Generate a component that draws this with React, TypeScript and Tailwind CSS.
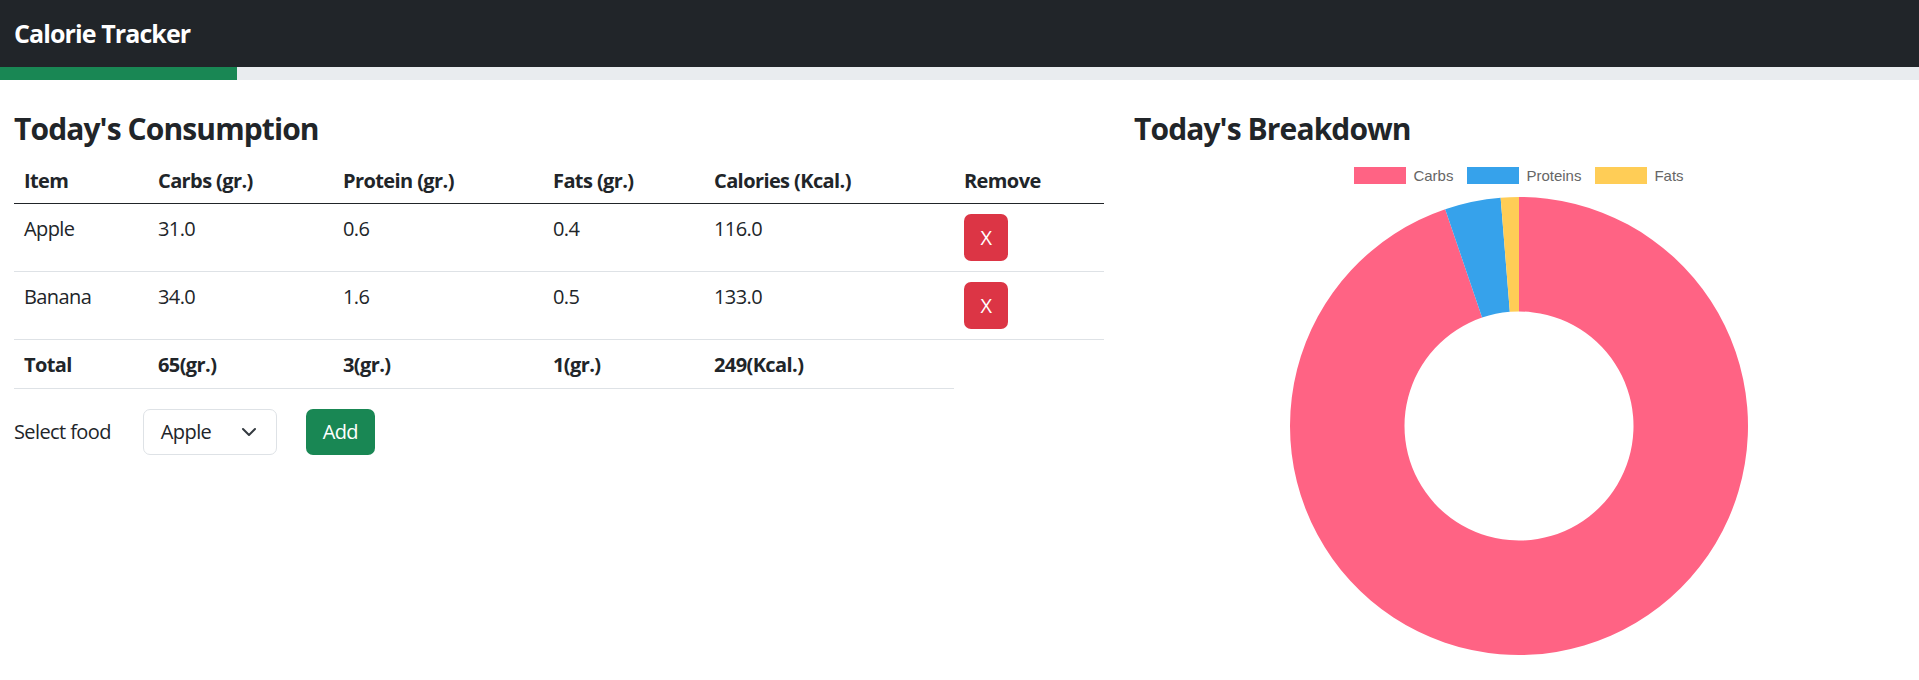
import React from "react";

type Slice = { label: string; color: string; from: number; to: number };

const slices: Slice[] = [
  { label: "Carbs", color: "#ff6384", from: 0, to: 341.2 },
  { label: "Proteins", color: "#36a2eb", from: 341.2, to: 355.4 },
  { label: "Fats", color: "#ffcd56", from: 355.4, to: 360 },
];

const rows = [
  { item: "Apple", carbs: "31.0", protein: "0.6", fats: "0.4", cal: "116.0" },
  { item: "Banana", carbs: "34.0", protein: "1.6", fats: "0.5", cal: "133.0" },
];

const pt = (deg: number, r: number, c: number) => {
  const a = (deg * Math.PI) / 180;
  return [c + r * Math.sin(a), c - r * Math.cos(a)];
};

const sector = (a0: number, a1: number, R: number, r: number, c: number) => {
  const [x1, y1] = pt(a0, R, c);
  const [x2, y2] = pt(a1, R, c);
  const [x3, y3] = pt(a1, r, c);
  const [x4, y4] = pt(a0, r, c);
  const large = a1 - a0 > 180 ? 1 : 0;
  return `M${x1} ${y1} A${R} ${R} 0 ${large} 1 ${x2} ${y2} L${x3} ${y3} A${r} ${r} 0 ${large} 0 ${x4} ${y4} Z`;
};

const Doughnut = () => (
  <svg width="460" height="460" viewBox="0 0 460 460">
    {slices.map((s) => (
      <path key={s.label} d={sector(s.from, s.to, 229, 114.5, 230)} fill={s.color} />
    ))}
  </svg>
);

const th = "text-left align-bottom px-[10px] pt-[13px] pb-[7px] leading-[30px] font-bold tracking-[-0.6px] border-b border-[#212529]";
const td = "text-left align-top px-[10px] py-[10px] leading-[30px] border-b border-[#dee2e6]";
const tdTotal = "text-left align-top px-[10px] pt-[10px] pb-[8px] leading-[30px] font-bold border-b border-[#dee2e6]";

const App = () => {
  return (
    <div className="min-h-screen bg-white text-[#212529] text-[20px] tracking-[-0.6px] font-['Open_Sans',sans-serif]">
      <nav className="h-[67px] bg-[#212529] flex items-center px-[14px]">
        <span className="text-white text-[25px] font-bold tracking-[-0.9px]">Calorie Tracker</span>
      </nav>
      <div className="h-[13px] bg-[#e9ecef]">
        <div className="h-full w-[237px] bg-[#198754]" />
      </div>

      <div className="flex">
        {/* left: consumption table */}
        <div className="w-[1119px] pl-[14px] pr-[15px]">
          <h3 className="mt-[31px] mb-[6px] text-[30px] leading-[36px] font-bold tracking-[-0.9px]">Today's Consumption</h3>
          <table className="w-full table-fixed border-collapse">
            <thead>
              <tr>
                <th className={`${th} w-[134px]`}>Item</th>
                <th className={`${th} w-[185px]`}>Carbs (gr.)</th>
                <th className={`${th} w-[210px]`}>Protein (gr.)</th>
                <th className={`${th} w-[161px]`}>Fats (gr.)</th>
                <th className={`${th} w-[250px]`}>Calories (Kcal.)</th>
                <th className={`${th} w-[150px]`}>Remove</th>
              </tr>
            </thead>
            <tbody>
              {rows.map((r) => (
                <tr key={r.item}>
                  <td className={td}>{r.item}</td>
                  <td className={td}>{r.carbs}</td>
                  <td className={td}>{r.protein}</td>
                  <td className={td}>{r.fats}</td>
                  <td className={td}>{r.cal}</td>
                  <td className={td}>
                    <button className="w-[44px] h-[47px] rounded-[7px] bg-[#dc3545] text-white text-[20px] flex items-center justify-center">
                      X
                    </button>
                  </td>
                </tr>
              ))}
              <tr>
                <td className={tdTotal}>Total</td>
                <td className={tdTotal}>65(gr.)</td>
                <td className={tdTotal}>3(gr.)</td>
                <td className={tdTotal}>1(gr.)</td>
                <td className={tdTotal}>249(Kcal.)</td>
              </tr>
            </tbody>
          </table>

          <div className="mt-[20px] flex items-center">
            <label className="leading-[30px]">Select food</label>
            <div className="ml-[32px] w-[134px] h-[46px] border border-[#dee2e6] rounded-[7px] flex items-center justify-between pl-[17px] pr-[19px]">
              <span>Apple</span>
              <svg width="16" height="12" viewBox="0 0 16 12">
                <path d="m2 3 6 6 6-6" fill="none" stroke="#343a40" strokeWidth="2" strokeLinecap="round" strokeLinejoin="round" />
              </svg>
            </div>
            <button className="ml-[29px] w-[69px] h-[46px] rounded-[7px] bg-[#198754] text-white text-[20px]">Add</button>
          </div>
        </div>

        {/* right: breakdown chart */}
        <div className="flex-1 px-[15px]">
          <h3 className="mt-[31px] text-[30px] leading-[36px] font-bold tracking-[-0.9px]">Today's Breakdown</h3>
          <div className="mt-[20px] flex justify-center items-center gap-[14px] tracking-normal font-['Liberation_Sans',Arial,sans-serif] text-[15px] text-[#666]">
            {slices.map((s) => (
              <div key={s.label} className="flex items-center gap-[7px]">
                <span className="w-[52px] h-[17px]" style={{ backgroundColor: s.color }} />
                <span className="leading-[17px]">{s.label}</span>
              </div>
            ))}
          </div>
          <div className="mt-[12px] flex justify-center">
            <Doughnut />
          </div>
        </div>
      </div>
    </div>
  );
};

export default App;
